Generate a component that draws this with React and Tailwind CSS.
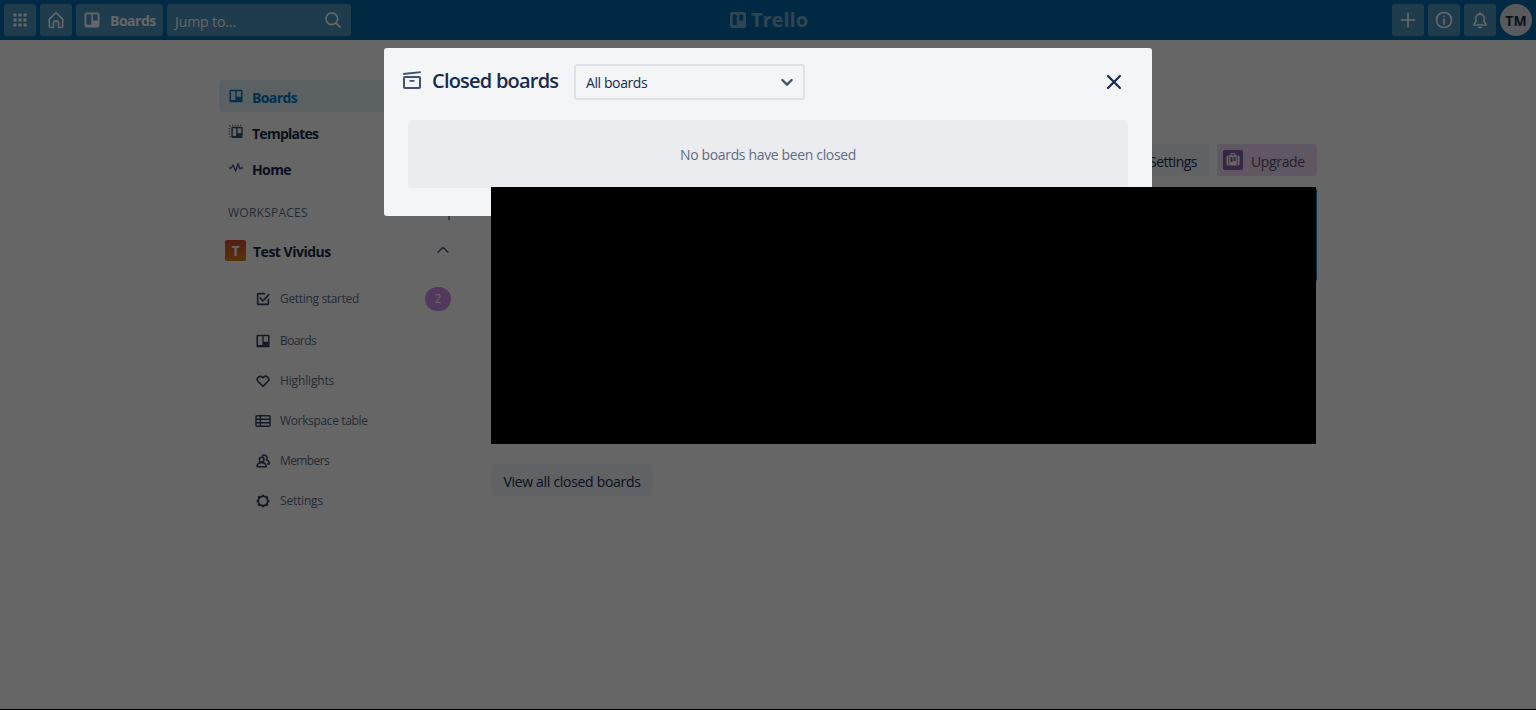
import React from "react";

const Svg = ({ children, className = "", size = 16, sw = 2 }) => (
  <svg
    width={size}
    height={size}
    viewBox="0 0 24 24"
    fill="none"
    stroke="currentColor"
    strokeWidth={sw}
    strokeLinecap="round"
    strokeLinejoin="round"
    className={"shrink-0 " + className}
  >
    {children}
  </svg>
);

const BOARD_PATH =
  "M4 2.500a1.800 1.800 0 0 0-1.800 1.800v15.400a1.800 1.800 0 0 0 1.800 1.800h16a1.800 1.800 0 0 0 1.800-1.800V4.300a1.800 1.800 0 0 0-1.800-1.800H4zm.5 2.200h6.500v13.300H4.500V4.700zm8.500 0h6.500v8.300h-6.500V4.700z";

const BoardIcon = ({ size = 16, className = "" }) => (
  <svg width={size} height={size} viewBox="0 0 24 24" className={"shrink-0 " + className}>
    <path fill="currentColor" fillRule="evenodd" d={BOARD_PATH} />
  </svg>
);

const TemplateIcon = () => (
  <svg width="16" height="16" viewBox="0 0 24 24" className="shrink-0">
    <path
      fill="currentColor"
      fillOpacity="0.75"
      d="M2 2h2v2H2zM6 1h2v2H6zM10 1h2v2h-2zM14 1h2v2h-2zM18 1h2v2h-2zM1 6h2v2H1zM1 10h2v2H1zM1 14h2v2H1zM2 18h2v2H2z"
    />
    <path
      fill="currentColor"
      fillRule="evenodd"
      d="M7 4a2 2 0 0 0-2 2v13a2 2 0 0 0 2 2h13a2 2 0 0 0 2-2V6a2 2 0 0 0-2-2H7zm.2 2.200h5v11.800h-5V6.200zm7.200 0h5.400v7.800h-5.400V6.200z"
    />
  </svg>
);

const HeaderButton = ({ children, className = "w-8 justify-center" }) => (
  <button className={"flex h-8 items-center rounded-[3px] bg-white/30 " + className}>{children}</button>
);

const NavItem = ({ icon, label, className = "text-[#172b4d]", iconClass = "text-[#42526e]", text }) => (
  <li className={"flex h-8 items-center rounded-[4px] pl-[9px] text-[14px] font-bold " + className}>
    <span className={iconClass}>{icon}</span>
    <span className={"ml-2 mt-[2px] " + text}>{label}</span>
  </li>
);

const SubItem = ({ icon, label, height = "h-10", text = "", children }) => (
  <li className={"flex items-center pl-9 pr-2 text-[12px] text-[#5e6c84] " + height}>
    <span className="text-[#344563]">{icon}</span>
    <span className={"ml-[9px] flex-1 " + text}>{label}</span>
    {children}
  </li>
);

function Header() {
  return (
    <header className="flex h-10 items-center justify-between bg-[#026aa7] px-1 text-white">
      <div className="flex w-[347px] gap-1">
        <HeaderButton>
          <svg width="16" height="16" viewBox="0 0 16 16" fill="currentColor">
            <path d="M1.500 1.500h3v3h-3zM6.500 1.500h3v3h-3zM11.500 1.500h3v3h-3zM1.500 6.500h3v3h-3zM6.500 6.500h3v3h-3zM11.500 6.500h3v3h-3zM1.500 11.500h3v3h-3zM6.500 11.500h3v3h-3zM11.500 11.500h3v3h-3z" />
          </svg>
        </HeaderButton>
        <HeaderButton>
          <Svg size={20}>
            <path d="M4 11v8.500a1.500 1.500 0 0 0 1.500 1.500H9v-5a3 3 0 0 1 6 0v5h3.500a1.500 1.500 0 0 0 1.500-1.500V11l-8-8-8 8z" />
          </Svg>
        </HeaderButton>
        <HeaderButton className="w-[87px] pl-[6px]">
          <svg width="20" height="20" viewBox="0 0 20 20" className="shrink-0">
            <path
              fill="currentColor"
              fillRule="evenodd"
              d="M4.500 2.500a2 2 0 0 0-2 2v11a2 2 0 0 0 2 2h11a2 2 0 0 0 2-2v-11a2 2 0 0 0-2-2h-11zM4.300 4.300h5v10.400h-5zM11 4.300h4.700v6.200H11z"
            />
          </svg>
          <span className="ml-2 text-[14px] font-bold tracking-[-0.5px]">Boards</span>
        </HeaderButton>
        <HeaderButton className="w-[184px] justify-between pl-2 pr-2">
          <span className="mt-[2px] text-[14px] tracking-[-0.1px]">Jump to...</span>
          <Svg size={20}>
            <circle cx="10.500" cy="10.500" r="7" />
            <path d="M16 16l4.500 4.500" />
          </Svg>
        </HeaderButton>
      </div>
      <div className="flex items-center gap-[3px] opacity-45">
        <svg width="20" height="20" viewBox="0 0 20 20">
          <path
            fill="currentColor"
            fillRule="evenodd"
            d="M4 2a2 2 0 0 0-2 2v12a2 2 0 0 0 2 2h12a2 2 0 0 0 2-2V4a2 2 0 0 0-2-2H4zm.8 2.500h3.900v10.500H4.800zM11.300 4.500h3.900v6h-3.900z"
          />
        </svg>
        <span className="text-[20px] font-bold leading-5">Trello</span>
      </div>
      <div className="flex w-[347px] justify-end gap-1">
        <HeaderButton>
          <Svg size={20}>
            <path d="M12 4v16M4 12h16" />
          </Svg>
        </HeaderButton>
        <HeaderButton>
          <Svg size={20}>
            <circle cx="12" cy="12" r="9" />
            <path d="M12 11v6" />
            <path d="M12 7.500v.1" />
          </Svg>
        </HeaderButton>
        <HeaderButton>
          <Svg size={20}>
            <path d="M7 10a5 5 0 0 1 10 0v4l2.500 4h-15L7 14v-4z" />
            <path d="M10.500 21h3M12 3v1.500" />
          </Svg>
        </HeaderButton>
        <div className="flex h-8 w-8 items-center justify-center rounded-full bg-[#dfe1e6] text-[14px] font-bold text-[#172b4d]">
          TM
        </div>
      </div>
    </header>
  );
}

function Sidebar() {
  return (
    <nav className="w-[240px] pt-10">
      <ul className="flex flex-col gap-1">
        <NavItem
          icon={<BoardIcon />}
          label="Boards"
          className="bg-[#e4f0f6] text-[#0079bf]"
          iconClass="text-[#0079bf]"
          text="tracking-[-0.6px]"
        />
        <NavItem icon={<TemplateIcon />} label="Templates" text="tracking-[-0.75px]" />
        <NavItem
          icon={
            <Svg>
              <path d="M2 12h3l2.500-4.500 4 9 3.500-11 3 8 1-1.500h3" />
            </Svg>
          }
          label="Home"
          text="tracking-[-0.6px]"
        />
      </ul>
      <div className="mt-[17px] flex h-6 items-center justify-between pl-[9px] pr-[2px] text-[12px] font-medium text-[#5e6c84]">
        <span className="tracking-[0.25px]">WORKSPACES</span>
        <Svg>
          <path d="M12 3v19M4 12h16" />
        </Svg>
      </div>
      <div className="mt-[9px] flex h-8 items-center pl-[6px] pr-2">
        <div className="flex h-[21px] w-[21px] items-center justify-center rounded-[2px] bg-gradient-to-b from-[#d04a26] to-[#d97c1e] text-[14px] font-bold text-white">
          T
        </div>
        <span className="ml-[7px] mt-[2px] flex-1 text-[14px] font-bold tracking-[-0.5px] text-[#172b4d]">
          Test Vividus
        </span>
        <Svg className="text-[#42526e]">
          <path d="M4.500 15.500l7.500-7.500 7.500 7.500" />
        </Svg>
      </div>
      <ul className="mt-[11px]">
        <SubItem
          height="h-11"
          label="Getting started"
          text="tracking-[-0.33px]"
          icon={
            <Svg sw={2.500}>
              <path d="M14 4H5a1 1 0 0 0-1 1v14a1 1 0 0 0 1 1h14a1 1 0 0 0 1-1v-6" />
              <path d="M8 10.500l4 4.500 8.500-9.500" />
            </Svg>
          }
        >
          <span className="flex h-6 w-[26px] items-center justify-center rounded-full bg-[#cd8de5] text-white">2</span>
        </SubItem>
        <SubItem label="Boards" icon={<BoardIcon />} text="tracking-[-0.6px]" />
        <SubItem
          label="Highlights"
          text="tracking-[-0.15px]"
          icon={
            <Svg sw={2.400}>
              <path d="M12 20l-7.200-7.200a4.500 4.500 0 0 1 6.400-6.400l.8.800.8-.8a4.500 4.500 0 0 1 6.400 6.400L12 20z" />
            </Svg>
          }
        />
        <SubItem
          label="Workspace table"
          text="tracking-[-0.35px]"
          icon={
            <Svg sw={2.200}>
              <rect x="1.500" y="4" width="21" height="16" rx="1.500" />
              <path d="M8 4v16M2 9.300h20M2 14.700h20" />
            </Svg>
          }
        />
        <SubItem
          label="Members"
          text="tracking-[-0.6px]"
          icon={
            <Svg sw={2.300}>
              <circle cx="10" cy="10" r="3.500" />
              <path d="M3 20.500c0-4 3-6 7-6s7 2 7 6H3z" />
              <path d="M11 4.500a3.600 3.600 0 1 1 6 5.500c3 1 4.500 3.500 4.500 6.500H19" />
            </Svg>
          }
        />
        <SubItem
          label="Settings"
          text="tracking-[-0.2px]"
          icon={
            <Svg sw={2.600}>
              <circle cx="12" cy="12" r="7" />
              <path
                strokeWidth="3.800"
                strokeLinecap="butt"
                d="M12 5.500V2.500M12 21.500v-3M5.500 12h-3M21.500 12h-3M7.200 7.200L5 5M19 19l-2.200-2.200M7.200 16.800L5 19M19 5l-2.200 2.200"
              />
            </Svg>
          }
        />
      </ul>
    </nav>
  );
}

function Content() {
  return (
    <main className="w-[826px] pt-[104px] text-[14px]">
      <div className="flex justify-end gap-2">
        <button className="flex h-8 w-[110px] items-center justify-end rounded-[3px] bg-[#f1f4f7] pr-3 text-[#172b4d]">
          <span className="mt-[2px] tracking-[-0.5px]">Settings</span>
        </button>
        <button className="flex h-8 w-[100px] items-center rounded-[3px] bg-[#eddbf4] pl-[6px] text-[#5e4b75]">
          <span className="flex h-5 w-5 items-center justify-center rounded-[2px] bg-[#89609e] text-white">
            <svg width="16" height="16" viewBox="0 0 16 16">
              <path
                fill="currentColor"
                fillRule="evenodd"
                d="M4.200 3.200h1.300V2q0-1 1-1h3q1 0 1 1v1.200h1.300v10.300H4.200zM6.500 3.200h3V2h-3zM5.600 5v5h2V5zM8.600 5v4h2V5zM3.400 3.500v10H2.500q-1 0-1-1v-8q0-1 1-1zM12.600 3.500v10h.9q1 0 1-1v-8q0-1-1-1z"
              />
            </svg>
          </span>
          <span className="ml-2 mt-[2px] tracking-[-0.35px]">Upgrade</span>
        </button>
      </div>
      <div className="mt-3 h-[94px] rounded-[3px] bg-[#0079bf]" />
      <button className="mt-[182px] flex h-8 w-[162px] items-center justify-center rounded-[3px] bg-[#f1f4f7] text-[#172b4d]">
        <span className="mt-[2px] whitespace-nowrap tracking-[-0.3px]">View all closed boards</span>
      </button>
    </main>
  );
}

function Dialog() {
  return (
    <section className="absolute left-[384px] top-[48px] h-[168px] w-[768px] rounded-[3px] bg-[#f4f5f7] px-6 pt-4">
      <div className="flex h-9 items-center">
        <svg
          width="20"
          height="20"
          viewBox="0 0 20 20"
          fill="none"
          stroke="currentColor"
          strokeWidth="2"
          className="-ml-[6px] -mt-1 shrink-0 text-[#42526e]"
        >
          <rect x="2" y="7" width="16" height="11" rx="0.800" />
          <path d="M1.200 4L18.800 2.200M7.500 10.800h5" strokeWidth="1.800" />
        </svg>
        <h2 className="-mt-[2px] ml-[10px] w-[142px] whitespace-nowrap text-[20px] font-semibold leading-6 tracking-[-0.78px] text-[#172b4d]">
          Closed boards
        </h2>
        <div className="flex h-9 w-[231px] items-center justify-between rounded-[3px] border-2 border-[#dfe1e6] pl-[10px] pr-2 text-[14px] text-[#172b4d]">
          <span className="mt-[1px] tracking-[-0.4px]">All boards</span>
          <Svg size={16} sw={3.500} className="text-[#42526e]">
            <path d="M5 9l7 7 7-7" />
          </Svg>
        </div>
        <Svg size={24} className="ml-auto mr-[2px] text-[#172b4d]" sw={2.200}>
          <path d="M6 6l12 12M18 6L6 18" />
        </Svg>
      </div>
      <div className="mt-5 flex h-[68px] items-center justify-center rounded-[3px] bg-[#ebecf0] text-[14px] tracking-[-0.35px] text-[#5e6c84]">
        No boards have been closed
      </div>
    </section>
  );
}

export default function App() {
  return (
    <div className="relative h-[710px] w-[1536px] overflow-hidden bg-white font-['Open_Sans','Noto_Sans',sans-serif]">
      <Header />
      <div className="flex gap-8 pl-[219px]">
        <Sidebar />
        <Content />
      </div>
      <div className="absolute inset-0 border-b border-black bg-black/60" />
      <Dialog />
      <div className="absolute left-[491px] top-[187px] h-[257px] w-[825px] bg-black" />
    </div>
  );
}
